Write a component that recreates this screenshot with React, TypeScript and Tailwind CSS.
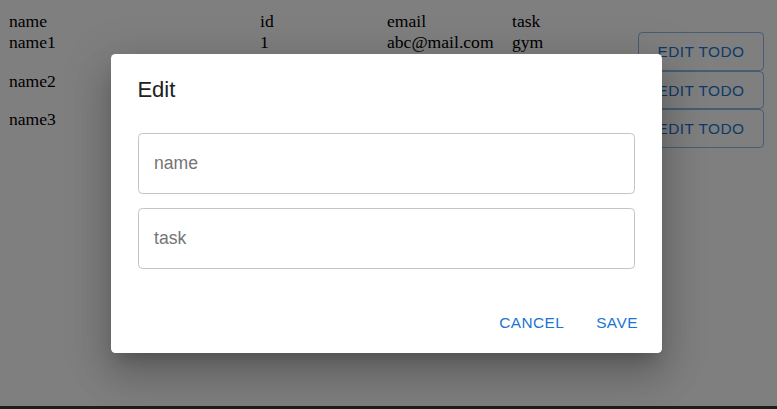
const rows = [
  { name: "name1", id: "1", email: "abc@mail.com", task: "gym", h: "h-[39px]" },
  { name: "name2", id: "", email: "", task: "", h: "h-[38px]" },
  { name: "name3", id: "", email: "", task: "", h: "h-[39px]" },
];

const TodoTable = () => {
  return (
    <div className="pt-[11px] pl-[9px] font-['Liberation_Serif',serif] text-[17.6px] leading-[21px] text-black">
      <div className="grid h-[21px] grid-cols-[251px_127px_125px_126px_126px]">
        <div>name</div>
        <div>id</div>
        <div>email</div>
        <div>task</div>
        <div></div>
      </div>
      {rows.map((row) => (
        <div
          key={row.name}
          className={`grid ${row.h} grid-cols-[251px_127px_125px_126px_126px] items-start`}
        >
          <div>{row.name}</div>
          <div>{row.id}</div>
          <div>{row.email}</div>
          <div>{row.task}</div>
          <button className="flex h-full w-[126px] items-center justify-center rounded-[4.4px] border border-[rgba(25,118,210,0.5)] font-['Liberation_Sans',Arial,sans-serif] text-[15.4px] tracking-[0.44px] text-[#1976d2]">
            EDIT TODO
          </button>
        </div>
      ))}
    </div>
  );
};

const EditDialog = () => {
  return (
    <div className="flex h-[299px] w-[551px] flex-col rounded-[4.4px] bg-white font-['Liberation_Sans',Arial,sans-serif] shadow-[0px_11px_15px_-7px_rgba(0,0,0,0.2),0px_24px_38px_3px_rgba(0,0,0,0.14),0px_9px_46px_8px_rgba(0,0,0,0.12)]">
      <h2 className="px-[26.4px] pt-[18px] text-[22px] leading-[35.2px] text-[#212121]">
        Edit
      </h2>
      <div className="mt-[26.5px] flex flex-col gap-[14px] px-[27px]">
        <input
          placeholder="name"
          className="h-[61px] w-full rounded-[4.4px] border border-[#c4c4c4] px-[15px] text-[17.6px] text-[#212121] outline-none placeholder:text-[#757575]"
        />
        <input
          placeholder="task"
          className="h-[61px] w-full rounded-[4.4px] border border-[#c4c4c4] px-[15px] text-[17.6px] text-[#212121] outline-none placeholder:text-[#757575]"
        />
      </div>
      <div className="mt-auto flex justify-end gap-[8.8px] py-[8.8px] pr-[9.8px]">
        <button className="min-w-[70.4px] rounded-[4.4px] px-[8.8px] py-[6.6px] text-[15.4px] leading-[1.75] tracking-[0.44px] text-[#1976d2]">
          CANCEL
        </button>
        <button className="min-w-[70.4px] rounded-[4.4px] px-[8.8px] py-[6.6px] text-[15.4px] leading-[1.75] tracking-[0.44px] text-[#1976d2]">
          SAVE
        </button>
      </div>
    </div>
  );
};

export default function App() {
  return (
    <div className="flex h-[409px] w-full flex-col overflow-hidden bg-white">
      <div className="relative h-[406px]">
        <TodoTable />
        {/* modal backdrop */}
        <div className="absolute inset-0 flex items-center justify-center bg-black/50 pr-[4px]">
          <EditDialog />
        </div>
      </div>
      <div className="h-[3px] bg-[#1e1e1e]" />
    </div>
  );
}
